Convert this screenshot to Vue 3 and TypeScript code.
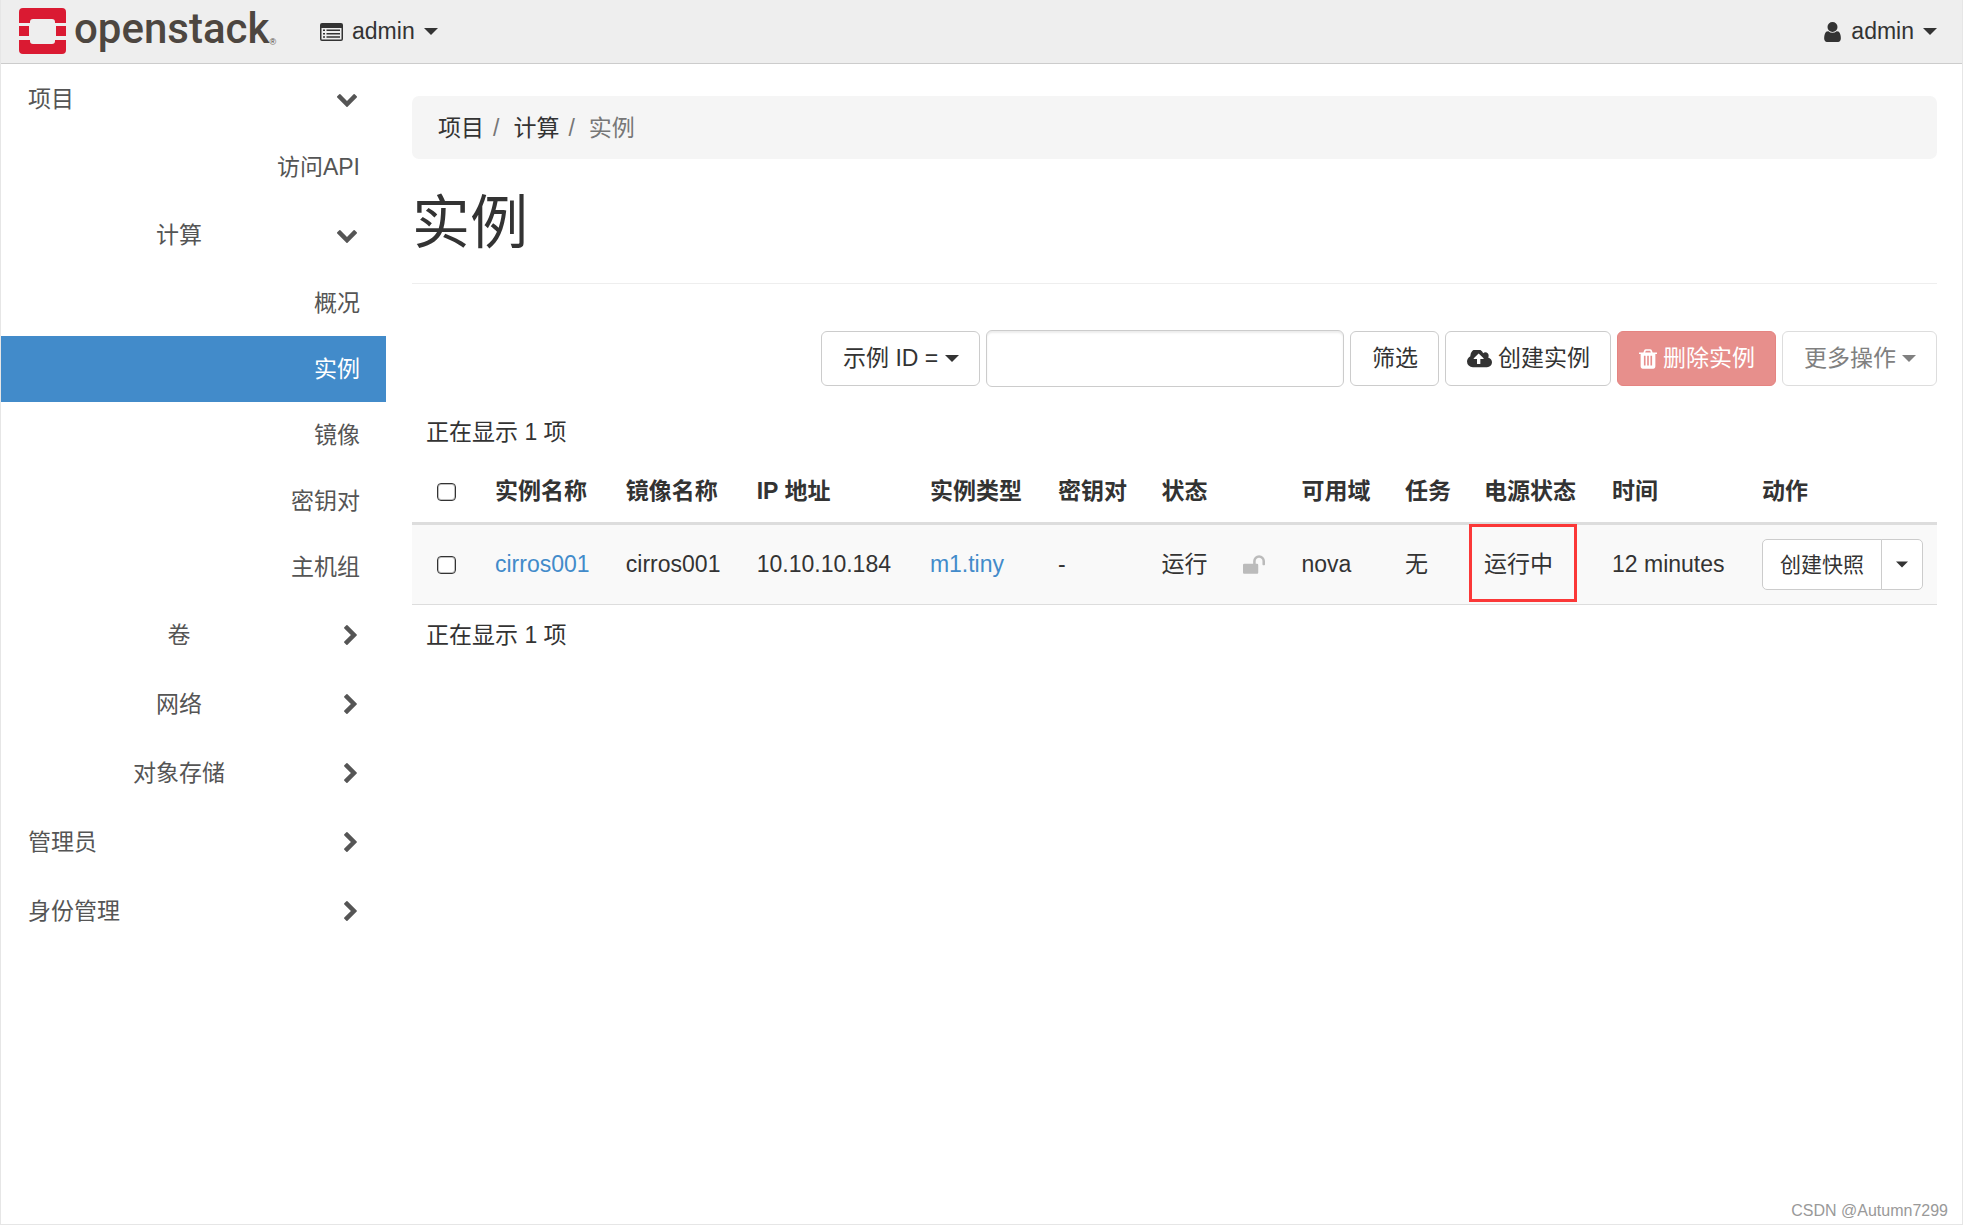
<script setup lang="ts">
import { ref } from 'vue'

interface NavLeaf {
  label: string
  active?: boolean
}
interface NavGroup {
  label: string
  open: boolean
  items: NavLeaf[]
}

const computeItems: NavLeaf[] = [
  { label: '概况' },
  { label: '实例', active: true },
  { label: '镜像' },
  { label: '密钥对' },
  { label: '主机组' },
]

const projectGroups: NavGroup[] = [
  { label: '计算', open: true, items: computeItems },
  { label: '卷', open: false, items: [] },
  { label: '网络', open: false, items: [] },
  { label: '对象存储', open: false, items: [] },
]

const closedPanels: string[] = ['管理员', '身份管理']

interface Column {
  key: string
  label: string
}

const columns: Column[] = [
  { key: 'name', label: '实例名称' },
  { key: 'image', label: '镜像名称' },
  { key: 'ip', label: 'IP 地址' },
  { key: 'flavor', label: '实例类型' },
  { key: 'key-pair', label: '密钥对' },
  { key: 'status', label: '状态' },
  { key: 'lock', label: '' },
  { key: 'zone', label: '可用域' },
  { key: 'task', label: '任务' },
  { key: 'power-state', label: '电源状态' },
  { key: 'age', label: '时间' },
  { key: 'actions', label: '动作' },
]

interface Instance {
  name: string
  image: string
  ip: string
  flavor: string
  keyPair: string
  status: string
  zone: string
  task: string
  power: string
  age: string
}

const instances: Instance[] = [
  {
    name: 'cirros001',
    image: 'cirros001',
    ip: '10.10.10.184',
    flavor: 'm1.tiny',
    keyPair: '-',
    status: '运行',
    zone: 'nova',
    task: '无',
    power: '运行中',
    age: '12 minutes',
  },
]

const filterText = ref('')
const countText = `正在显示 ${instances.length} 项`
</script>

<template>
  <div class="page">
    <header class="navbar">
      <a class="brand" href="#" aria-label="openstack">
        <svg class="brand-mark" viewBox="0 0 47 46" aria-hidden="true">
          <path d="M4 0h39a4 4 0 0 1 4 4v11H36v-1a3 3 0 0 0-3-3H14a3 3 0 0 0-3 3v1H0V4a4 4 0 0 1 4-4z" />
          <path d="M0 18h10v10H0zM37 18h10v10H37z" />
          <path d="M4 46h39a4 4 0 0 0 4-4V32H36v1a3 3 0 0 1-3 3H14a3 3 0 0 1-3-3v-1H0v10a4 4 0 0 0 4 4z" />
        </svg>
        <span class="brand-name">openstack</span><span class="brand-reg">®</span>
      </a>
      <button class="nav-menu" type="button">
        <svg class="ic-list" viewBox="0 0 23 18" aria-hidden="true">
          <path fill-rule="evenodd" d="M2 0h19a2 2 0 0 1 2 2v14a2 2 0 0 1-2 2H2a2 2 0 0 1-2-2V2a2 2 0 0 1 2-2zM1.500 5v11q0 .5.5.5h19q.5 0 .5-.5V5z" />
          <path d="M3 6.500h2V8H3zM3 10h2v1.500H3zM3 13.300h2v1.500H3zM6.500 6.500H20V8H6.500zM6.500 10H20v1.500H6.500zM6.500 13.300H20v1.500H6.500z" />
        </svg>
        <span>admin</span>
        <svg class="caret" viewBox="0 0 14 7" aria-hidden="true"><path d="M0 0h14L7 7z" /></svg>
      </button>
      <button class="nav-menu nav-user" type="button">
        <svg class="ic-user" viewBox="256 128 1280 1536" aria-hidden="true">
          <path d="M1536 1399q0 109-62.500 187t-150.500 78h-854q-88 0-150.500-78t-62.500-187q0-85 8.500-160.500t31.500-152 58.500-131 94-89 134.500-34.500q131 128 313 128t313-128q76 0 134.500 34.500t94 89 58.500 131 31.500 152 8.500 160.500zm-256-887q0 159-112.500 271.500t-271.500 112.500-271.500-112.500-112.500-271.500 112.500-271.500 271.500-112.500 271.500 112.500 112.500 271.500z" />
        </svg>
        <span>admin</span>
        <svg class="caret" viewBox="0 0 14 7" aria-hidden="true"><path d="M0 0h14L7 7z" /></svg>
      </button>
    </header>

    <div class="body">
      <nav class="sidebar" aria-label="导航">
        <button class="group" type="button" aria-expanded="true">
          <span class="group-label">项目</span>
          <span class="group-icon">
            <svg class="chev-down" viewBox="90 533 1612 1035" aria-hidden="true"><path d="M1683 808l-742 741q-19 19-45 19t-45-19l-742-741q-19-19-19-45.500t19-45.500l166-165q19-19 45-19t45 19l531 531 531-531q19-19 45-19t45 19l166 165q19 19 19 45.500t-19 45.500z" /></svg>
          </span>
        </button>
        <div class="panel">
          <a class="leaf" href="#">访问API</a>
          <template v-for="g in projectGroups" :key="g.label">
            <button class="group sub" type="button" :aria-expanded="g.open">
              <span class="group-label">{{ g.label }}</span>
              <span class="group-icon">
                <svg v-if="g.open" class="chev-down" viewBox="90 533 1612 1035" aria-hidden="true"><path d="M1683 808l-742 741q-19 19-45 19t-45-19l-742-741q-19-19-19-45.500t19-45.500l166-165q19-19 45-19t45 19l531 531 531-531q19-19 45-19t45 19l166 165q19 19 19 45.500t-19 45.500z" /></svg>
                <svg v-else class="chev-right" viewBox="346 26 1036 1612" aria-hidden="true"><path d="M1363 877l-742 742q-19 19-45 19t-45-19l-166-166q-19-19-19-45t19-45l531-531-531-531q-19-19-19-45t19-45l166-166q19-19 45-19t45 19l742 742q19 19 19 45t-19 45z" /></svg>
              </span>
            </button>
            <div v-if="g.open" class="panel">
              <a
                v-for="item in g.items"
                :key="item.label"
                class="leaf"
                :class="{ active: item.active }"
                href="#"
              >{{ item.label }}</a>
            </div>
          </template>
        </div>
        <button v-for="p in closedPanels" :key="p" class="group" type="button" aria-expanded="false">
          <span class="group-label">{{ p }}</span>
          <span class="group-icon">
            <svg class="chev-right" viewBox="346 26 1036 1612" aria-hidden="true"><path d="M1363 877l-742 742q-19 19-45 19t-45-19l-166-166q-19-19-19-45t19-45l531-531-531-531q-19-19-19-45t19-45l166-166q19-19 45-19t45 19l742 742q19 19 19 45t-19 45z" /></svg>
          </span>
        </button>
      </nav>

      <main class="content">
        <ol class="breadcrumb">
          <li><a href="#">项目</a></li>
          <li><a href="#">计算</a></li>
          <li class="current">实例</li>
        </ol>

        <h1>实例</h1>

        <div class="toolbar">
          <span class="filter-field">
            <select class="btn" aria-label="筛选字段">
              <option>示例 ID =</option>
            </select>
            <svg class="caret" viewBox="0 0 14 7" aria-hidden="true"><path d="M0 0h14L7 7z" /></svg>
          </span>
          <input v-model="filterText" class="filter-input" type="text" aria-label="筛选" />
          <button class="btn" type="button">筛选</button>
          <button class="btn" type="button">
            <svg class="ic-cloud" viewBox="-64 256 1920 1280" aria-hidden="true">
              <path d="M1216 864q0-14-9-23l-352-352q-9-9-23-9t-23 9l-351 351q-10 12-10 24 0 14 9 23t23 9h224v352q0 13 9.500 22.500t22.500 9.500h192q13 0 22.500-9.500t9.500-22.500v-352h224q13 0 22.500-9.500t9.500-22.500zm640 288q0 159-112.500 271.500t-271.500 112.500h-1088q-185 0-316.500-131.500t-131.500-316.500q0-130 70-240t188-165q-2-30-2-43 0-212 150-362t362-150q156 0 285.500 87t188.500 231q71-62 166-62 106 0 181 75t75 181q0 76-41 138 130 31 213.500 135.500t83.500 238.500z" />
            </svg>
            <span>创建实例</span>
          </button>
          <button class="btn danger" type="button" disabled>
            <svg class="ic-trash" viewBox="192 128 1408 1536" aria-hidden="true">
              <path d="M704 1376v-704q0-14-9-23t-23-9h-64q-14 0-23 9t-9 23v704q0 14 9 23t23 9h64q14 0 23-9t9-23zm256 0v-704q0-14-9-23t-23-9h-64q-14 0-23 9t-9 23v704q0 14 9 23t23 9h64q14 0 23-9t9-23zm256 0v-704q0-14-9-23t-23-9h-64q-14 0-23 9t-9 23v704q0 14 9 23t23 9h64q14 0 23-9t9-23zm-544-992h448l-48-117q-7-9-17-11h-317q-10 2-17 11zm928 32v64q0 14-9 23t-23 9h-96v948q0 83-47 143.500t-113 60.500h-832q-66 0-113-58.500t-47-141.500v-952h-96q-14 0-23-9t-9-23v-64q0-14 9-23t23-9h309l70-167q15-37 54-63t79-26h320q40 0 79 26t54 63l70 167h309q14 0 23 9t9 23z" />
            </svg>
            <span>删除实例</span>
          </button>
          <button class="btn muted" type="button" disabled>
            <span>更多操作</span>
            <svg class="caret" viewBox="0 0 14 7" aria-hidden="true"><path d="M0 0h14L7 7z" /></svg>
          </button>
        </div>

        <div class="count">{{ countText }}</div>
        <table class="instances">
          <thead>
            <tr>
              <th class="check"><input type="checkbox" aria-label="全选" /></th>
              <th v-for="c in columns" :key="c.key" :class="c.key" scope="col">{{ c.label }}</th>
            </tr>
          </thead>
          <tbody>
            <tr v-for="row in instances" :key="row.name">
              <td class="check"><input type="checkbox" :aria-label="row.name" /></td>
              <td><a href="#">{{ row.name }}</a></td>
              <td>{{ row.image }}</td>
              <td>{{ row.ip }}</td>
              <td><a href="#">{{ row.flavor }}</a></td>
              <td>{{ row.keyPair }}</td>
              <td>{{ row.status }}</td>
              <td>
                <svg class="ic-unlock" viewBox="64 128 1664 1408" aria-hidden="true">
                  <path d="M1728 576v256q0 26-19 45t-45 19h-64q-26 0-45-19t-19-45v-256q0-106-75-181t-181-75-181 75-75 181v192h96q40 0 68 28t28 68v576q0 40-28 68t-68 28h-960q-40 0-68-28t-28-68v-576q0-40 28-68t68-28h672v-192q0-185 131.500-316.500t316.500-131.500 316.500 131.500 131.500 316.500z" />
                </svg>
              </td>
              <td>{{ row.zone }}</td>
              <td>{{ row.task }}</td>
              <td class="power">{{ row.power }}<span class="highlight"></span></td>
              <td>{{ row.age }}</td>
              <td>
                <div class="split">
                  <button class="split-main" type="button">创建快照</button>
                  <button class="split-toggle" type="button" aria-label="更多">
                    <svg class="caret" viewBox="0 0 14 7" aria-hidden="true"><path d="M0 0h14L7 7z" /></svg>
                  </button>
                </div>
              </td>
            </tr>
          </tbody>
        </table>
        <div class="count">{{ countText }}</div>
      </main>
    </div>

    <div class="watermark">CSDN @Autumn7299</div>
  </div>
</template>

<style>
body {
  margin: 0;
  background: #fff;
}
</style>

<style scoped>
.page,
.page * {
  box-sizing: border-box;
}
.page {
  position: relative;
  min-height: 100vh;
  display: flex;
  flex-direction: column;
  border: 1px solid #e6e6e6;
  border-top: 0;
  background: #fff;
  color: #333;
  font-family: "Liberation Sans", "Noto Sans CJK SC", sans-serif;
  font-size: 23px;
  line-height: 33px;
}
svg {
  display: block;
  flex: none;
  fill: currentColor;
}
button,
select,
input {
  font: inherit;
  color: inherit;
  margin: 0;
}
button {
  cursor: pointer;
}
a {
  color: #428bca;
  text-decoration: none;
}
.caret {
  width: 14px;
  height: 7px;
}

/* top bar */
.navbar {
  display: flex;
  align-items: center;
  height: 64px;
  padding: 0 25px 0 18px;
  background: #eee;
  border-bottom: 1px solid #ccc;
}
.brand {
  display: flex;
  align-items: center;
  padding-bottom: 2px;
  color: #4d4640;
}
.brand-mark {
  width: 47px;
  height: 46px;
  fill: #da1a32;
}
.brand-name {
  margin-left: 8px;
  padding-bottom: 4px;
  font-family: Roboto, sans-serif;
  font-weight: 500;
  font-size: 42px;
  line-height: 48px;
}
.brand-reg {
  align-self: flex-end;
  font-size: 9px;
  line-height: 30px;
}
.nav-menu {
  display: flex;
  align-items: center;
  gap: 9px;
  padding: 0;
  border: 0;
  background: none;
  margin-left: 44px;
}
.nav-user {
  margin-left: auto;
}
.ic-list {
  width: 23px;
  height: 18px;
}
.ic-user {
  width: 19px;
  height: 20px;
}

/* layout */
.body {
  flex: 1;
  display: flex;
}
.sidebar {
  flex: none;
  width: 385px;
  color: #555;
}
.content {
  flex: 1;
  min-width: 0;
  padding: 32px 25px 32px 26px;
}

/* side navigation */
.group {
  display: flex;
  align-items: center;
  width: 100%;
  height: 69px;
  padding: 0 26px 0 27px;
  border: 0;
  background: none;
  text-align: left;
}
.group-label {
  flex: 1;
  padding-top: 2px;
}
.sub .group-label {
  text-align: center;
}
.group-icon {
  display: flex;
  justify-content: flex-end;
  width: 30px;
  padding-right: 3px;
}
.chev-down {
  width: 20px;
  height: 13px;
  margin-top: 4px;
}
.chev-right {
  width: 13px;
  height: 20px;
}
.panel {
  padding-top: 1px;
}
.leaf {
  display: block;
  padding: 17px 26px 16px;
  text-align: right;
  color: #555;
}
.leaf.active {
  background: #428bca;
  color: #fff;
}

/* heading */
.breadcrumb {
  display: flex;
  margin: 0;
  padding: 16px 26px 14px;
  list-style: none;
  background: #f5f5f5;
  border-radius: 7px;
}
.breadcrumb a {
  color: #333;
}
.breadcrumb li + li::before {
  content: "/";
  padding: 0 14px 0 9px;
  color: #777;
}
.breadcrumb .current {
  color: #777;
}
h1 {
  margin: 32px 0 46px;
  padding-bottom: 28px;
  border-bottom: 1px solid #eee;
  font-size: 58px;
  line-height: 64px;
  font-weight: 400;
}

/* toolbar */
.toolbar {
  display: flex;
  align-items: center;
  justify-content: flex-end;
  gap: 6px;
  margin-bottom: 15px;
}
.btn {
  display: flex;
  align-items: center;
  gap: 6px;
  padding: 10px 20px 10px 21px;
  border: 1px solid #ccc;
  border-radius: 6px;
  background: #fff;
  white-space: nowrap;
}
.filter-field {
  position: relative;
}
.filter-field .btn {
  appearance: none;
  height: 55px;
  padding-right: 40px;
}
.filter-field .caret {
  position: absolute;
  right: 21px;
  top: 24px;
  pointer-events: none;
}
.filter-input {
  width: 358px;
  height: 57px;
  padding: 10px 20px;
  border: 1px solid #ccc;
  border-radius: 6px;
  box-shadow: inset 0 2px 2px rgba(0, 0, 0, 0.08);
}
.danger {
  background: #e78f8c;
  border-color: #e58481;
  color: #fff;
}
.muted {
  border-color: #ddd;
  color: #808080;
}
.ic-cloud {
  width: 25px;
  height: 18px;
}
.ic-trash {
  width: 18px;
  height: 20px;
}

/* table */
.count {
  padding: 14px 14px 12px;
}
.instances {
  width: 100%;
  border-collapse: separate;
  border-spacing: 0;
}
.instances th,
.instances td {
  padding: 14px;
  text-align: left;
  white-space: nowrap;
}
.instances th {
  border-bottom: 3px solid #ddd;
}
.instances td {
  background: #f9f9f9;
  border-bottom: 1px solid #ddd;
}
.instances .check {
  width: 69px;
  text-align: center;
}
.instances .status {
  width: 82px;
}
.instances .lock {
  width: 58px;
}
.instances .actions {
  width: 189px;
}
.check input {
  appearance: none;
  display: block;
  width: 19px;
  height: 18px;
  margin: 0 auto;
  border: 1px solid #333;
  border-radius: 4px;
  background: #fff;
  box-shadow: inset 0 0 0 1px rgba(0, 0, 0, 0.25);
}
.ic-unlock {
  width: 22px;
  height: 19px;
  fill: #bbb;
}
.power {
  position: relative;
}
.highlight {
  position: absolute;
  left: -1px;
  top: -1px;
  width: 108px;
  height: 78px;
  border: 3px solid #fb3838;
}
.split {
  display: flex;
  font-size: 21px;
}
.split button {
  height: 51px;
  border: 1px solid #ccc;
  background: #fff;
}
.split-main {
  padding: 0 17px;
  border-radius: 5px 0 0 5px;
}
.split-toggle {
  width: 42px;
  margin-left: -1px;
  padding: 0 14px;
  border-radius: 0 5px 5px 0;
}
.split-toggle .caret {
  width: 12px;
  height: 7px;
}

.watermark {
  position: absolute;
  right: 14px;
  bottom: 3px;
  color: #999;
  font-size: 16px;
  line-height: 20px;
}
</style>
